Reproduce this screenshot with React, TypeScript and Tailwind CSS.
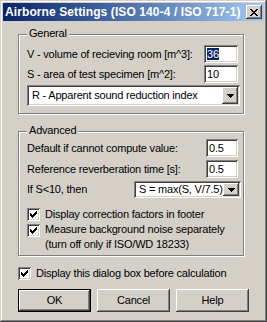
const raised =
  "shadow-[inset_-1px_-1px_0_#404040,inset_1px_1px_0_#ffffff,inset_-2px_-2px_0_#808080,inset_2px_2px_0_#d4d0c8]";
const sunken =
  "shadow-[inset_1px_1px_0_#808080,inset_-1px_-1px_0_#ffffff,inset_2px_2px_0_#404040,inset_-2px_-2px_0_#d4d0c8]";
const groupBox =
  "relative w-[226px] border border-[#808080] shadow-[1px_1px_0_#ffffff,inset_1px_1px_0_#ffffff]";

function CheckBox() {
  return (
    <span className={`flex h-[13px] w-[13px] shrink-0 items-center justify-center bg-white ${sunken}`}>
      <svg width="7" height="7" viewBox="0 0 7 7" shapeRendering="crispEdges">
        {[2, 3, 4, 3, 2, 1, 0].map((y, x) => (
          <rect key={x} x={x} y={y} width="1" height="3" fill="#000" />
        ))}
      </svg>
    </span>
  );
}

function Arrow() {
  return (
    <svg width="7" height="4" viewBox="0 0 7 4" shapeRendering="crispEdges">
      <rect x="0" y="0" width="7" height="1" fill="#000" />
      <rect x="1" y="1" width="5" height="1" fill="#000" />
      <rect x="2" y="2" width="3" height="1" fill="#000" />
      <rect x="3" y="3" width="1" height="1" fill="#000" />
    </svg>
  );
}

function Combo({ text, className }: { text: string; className: string }) {
  return (
    <div className={`flex items-center bg-white p-[2px] ${sunken} ${className}`}>
      <span className="flex-1 truncate pl-[3px] leading-[13px]">{text}</span>
      <span className={`flex h-full w-[16px] items-center justify-center bg-[#d4d0c8] ${raised}`}>
        <Arrow />
      </span>
    </div>
  );
}

function Field({ value, width, selected }: { value: string; width: string; selected?: boolean }) {
  return (
    <div className={`flex h-[18px] items-center bg-white pl-[3px] ${sunken} ${width}`}>
      <span className={selected ? "bg-[#0a246a] leading-[12px] text-white" : "leading-[12px]"}>{value}</span>
    </div>
  );
}

function CloseGlyph() {
  const rows = [
    [0, 1, 6, 7],
    [1, 2, 5, 6],
    [2, 3, 4, 5],
    [3, 4],
    [2, 3, 4, 5],
    [1, 2, 5, 6],
    [0, 1, 6, 7],
  ];
  return (
    <svg width="8" height="7" viewBox="0 0 8 7" shapeRendering="crispEdges">
      {rows.map((xs, y) => xs.map((x) => <rect key={`${x}-${y}`} x={x} y={y} width="1" height="1" fill="#000" />))}
    </svg>
  );
}

export default function App() {
  return (
    <div className="h-[322px] w-[267px] bg-[#d4d0c8] p-[3px] font-['Liberation_Sans',Arial,sans-serif] text-[11px] tracking-[-0.2px] text-black shadow-[inset_-1px_-1px_0_#404040,inset_1px_1px_0_#d4d0c8,inset_-2px_-2px_0_#808080,inset_2px_2px_0_#ffffff]">
      <div className="flex h-[18px] items-center bg-gradient-to-r from-[#0a246a] to-[#a6caf0] px-[2px]">
        <span className="text-[12px] font-bold tracking-[0.1px] text-white">Airborne Settings (ISO 140-4 / ISO 717-1)</span>
        <span className={`ml-auto flex h-[14px] w-[16px] items-center justify-center bg-[#d4d0c8] ${raised}`}>
          <CloseGlyph />
        </span>
      </div>

      <div className="px-[15px]">
        {/* General */}
        <div className={`mt-[13px] pb-[7px] pt-[10px] ${groupBox}`}>
          <span className="absolute -top-[8px] left-[8px] bg-[#d4d0c8] px-[2px] leading-[13px]">General</span>
          <div className="flex h-[18px] items-center pl-[8px] pr-[5px]">
            <span>V - volume of recieving room [m^3]:</span>
            <div className="ml-auto">
              <Field value="36" width="w-[34px]" selected />
            </div>
          </div>
          <div className="mt-[2px] flex h-[18px] items-center pl-[8px] pr-[5px]">
            <span>S - area of test specimen [m^2]:</span>
            <div className="ml-auto">
              <Field value="10" width="w-[34px]" />
            </div>
          </div>
          <Combo text="R - Apparent sound reduction index" className="ml-[8px] mt-[2px] h-[21px] w-[213px]" />
        </div>

        {/* Advanced */}
        <div className={`mt-[17px] pb-[3px] pt-[7px] ${groupBox}`}>
          <span className="absolute -top-[8px] left-[8px] bg-[#d4d0c8] px-[2px] leading-[13px]">Advanced</span>
          <div className="flex h-[18px] items-center pl-[8px] pr-[5px]">
            <span>Default if cannot compute value:</span>
            <div className="ml-auto">
              <Field value="0.5" width="w-[32px]" />
            </div>
          </div>
          <div className="mt-[3px] flex h-[18px] items-center pl-[8px] pr-[5px]">
            <span>Reference reverberation time [s]:</span>
            <div className="ml-auto">
              <Field value="0.5" width="w-[32px]" />
            </div>
          </div>
          <div className="mt-[3px] flex h-[17px] items-center pl-[8px] pr-[2px]">
            <span>If S&lt;10, then</span>
            <Combo text="S = max(S, V/7.5)" className="ml-auto h-[17px] w-[107px]" />
          </div>
          <div className="mt-[8px] flex h-[16px] items-center gap-[5px] pl-[8px]">
            <CheckBox />
            <span>Display correction factors in footer</span>
          </div>
          <div className="flex items-start gap-[5px] pl-[8px]">
            <span className="mt-[2px]">
              <CheckBox />
            </span>
            <span className="leading-[15px]">
              Measure background noise separately
              <br />
              (turn off only if ISO/WD 18233)
            </span>
          </div>
        </div>

        <div className="mt-[9px] flex h-[16px] items-center gap-[5px]">
          <CheckBox />
          <span>Display this dialog box before calculation</span>
        </div>

        <div className="mt-[8px] flex gap-[6px]">
          <button className="h-[23px] w-[75px] border border-black bg-[#d4d0c8] p-0">
            <span className={`flex h-full w-full items-center justify-center ${raised}`}>OK</span>
          </button>
          <button className={`flex h-[23px] w-[75px] items-center justify-center bg-[#d4d0c8] ${raised}`}>Cancel</button>
          <button className={`flex h-[23px] w-[75px] items-center justify-center bg-[#d4d0c8] ${raised}`}>Help</button>
        </div>
      </div>
    </div>
  );
}
